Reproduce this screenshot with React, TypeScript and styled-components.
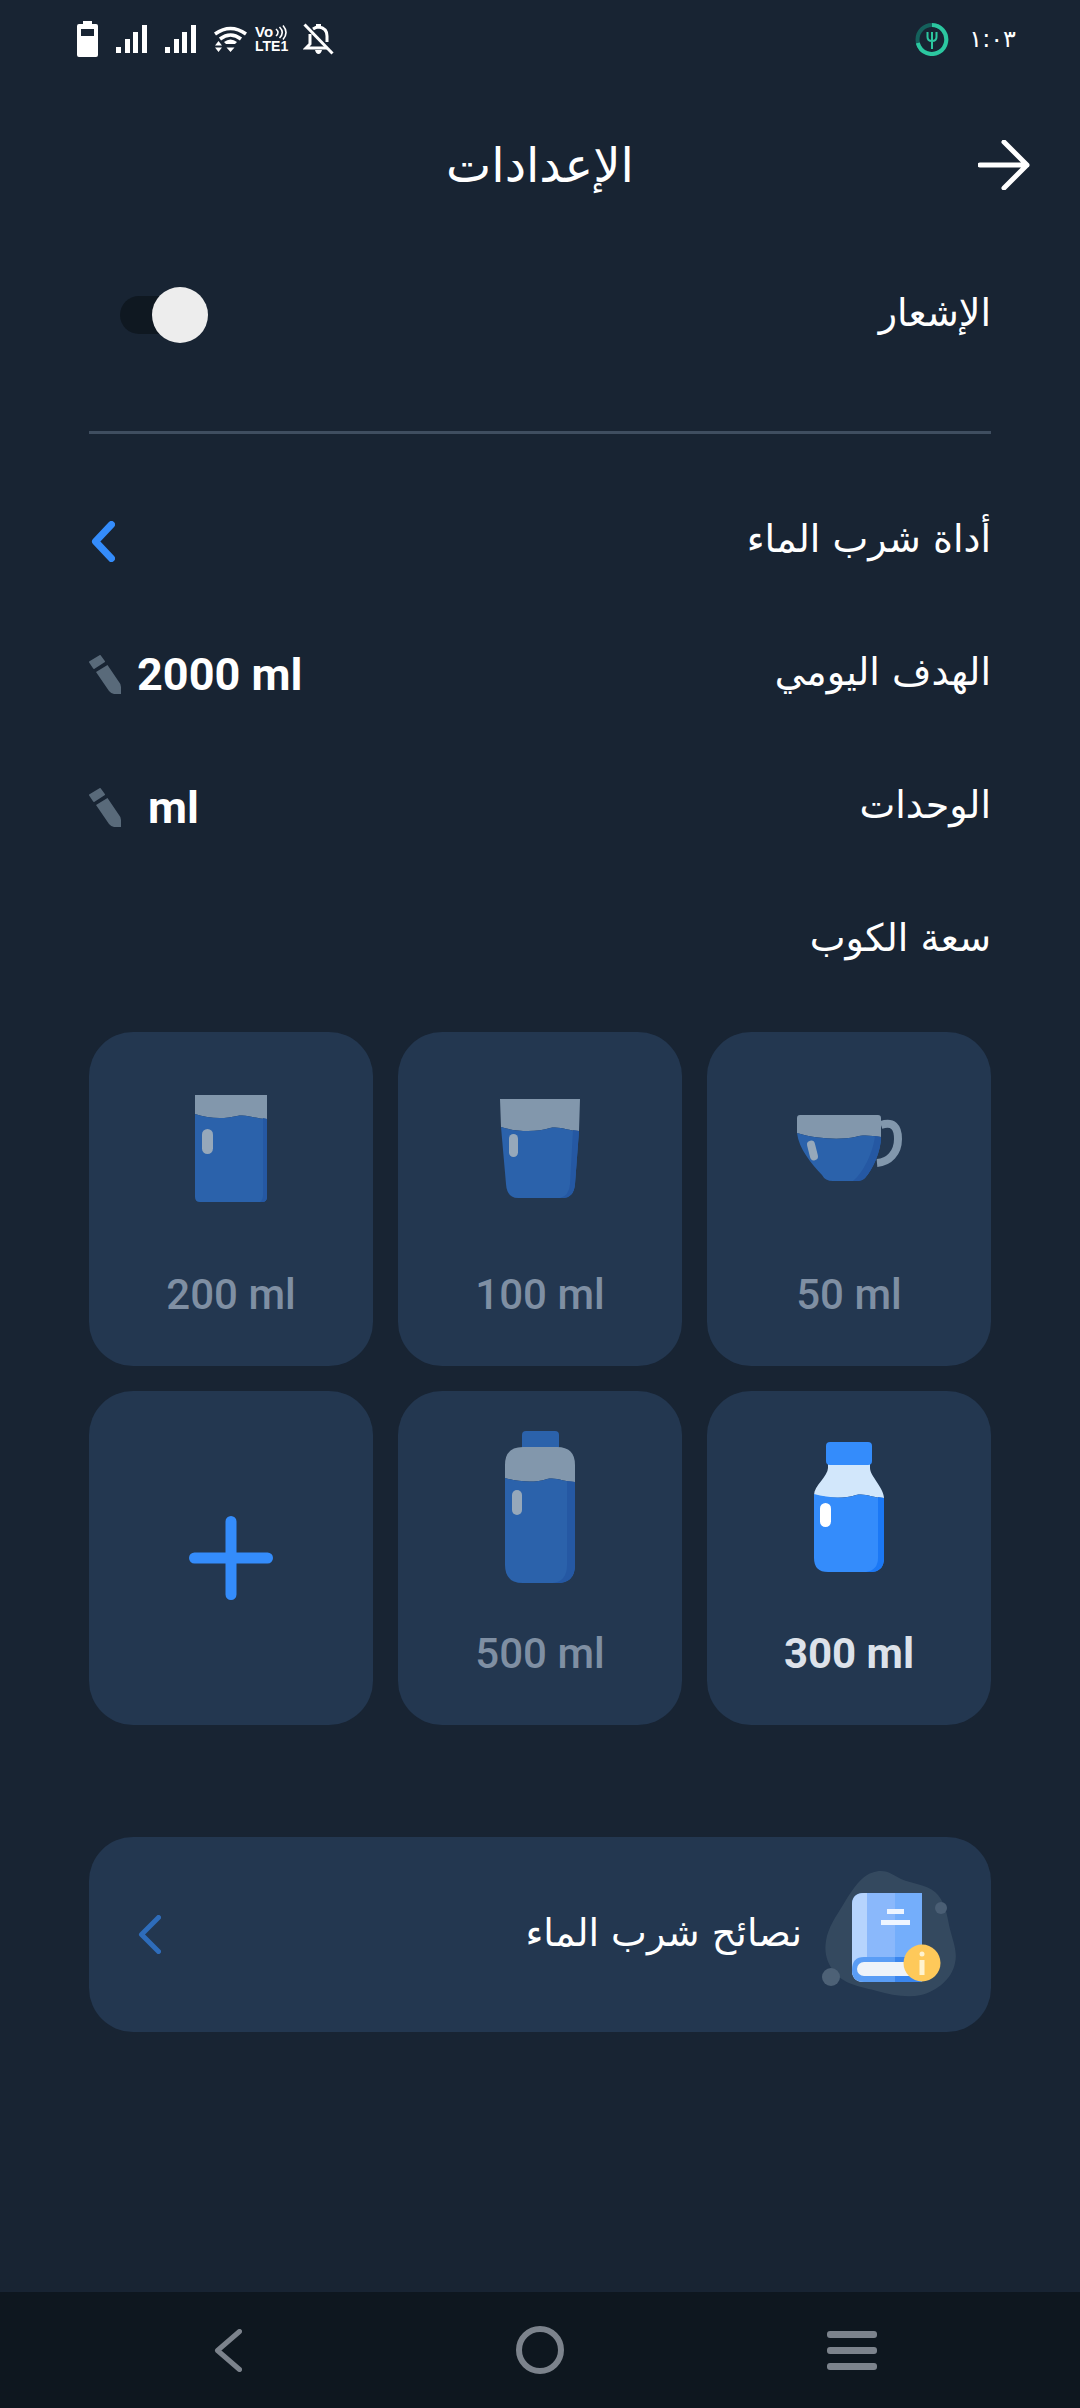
import React from "react";
import styled, { createGlobalStyle } from "styled-components";

const GlobalStyle = createGlobalStyle`
  html, body {
    margin: 0;
    padding: 0;
    background: #182433;
  }
  * {
    box-sizing: border-box;
  }
`;

const arabicFont = `"DejaVu Sans", sans-serif`;
const latinFont = `Roboto, "Liberation Sans", sans-serif`;

type DrinkKind = "tall" | "tumbler" | "cup" | "flask" | "bottle";

const dim = { top: "#8297ac", water: "#2b62ab", side: "#2558a3", cap: "#2b62ab", shine: "#96a8ba" };
const lit = { top: "#d2e7fb", water: "#348cfb", side: "#1b78f5", cap: "#348cfb", shine: "#ffffff" };

const DrinkIcon = ({ kind, selected }: { kind: DrinkKind; selected?: boolean }) => {
  const c = selected ? lit : dim;

  if (kind === "tall") {
    return (
      <svg width="72" height="107" viewBox="0 0 72 107">
        <path d="M0 0H72V24C60 24 52 19 42 21C30 24 14 24 0 19Z" fill={c.top} />
        <path d="M0 19C14 24 30 24 42 21C52 19 60 24 72 24V102Q72 107 67 107H5Q0 107 0 102Z" fill={c.water} />
        <path d="M68 23L72 24V102Q72 107 67 107H65Q68 105 68 100Z" fill={c.side} />
        <rect x="7" y="34" width="11" height="25" rx="5.5" fill={c.shine} />
      </svg>
    );
  }
  if (kind === "tumbler") {
    return (
      <svg width="80" height="99" viewBox="0 0 80 99">
        <path d="M0 0H80L79 32C68 32 60 27 50 29C38 33 16 33 1 28Z" fill={c.top} />
        <path d="M1 28C16 33 38 33 50 29C60 27 68 32 79 32L75 85Q74 99 62 99H18Q7 99 6 85Z" fill={c.water} />
        <path d="M73 31L79 32L75 85Q74 99 62 99H60Q69 97 70 85Z" fill={c.side} />
        <rect x="9" y="35" width="9" height="23" rx="4.5" fill={c.shine} />
      </svg>
    );
  }
  if (kind === "cup") {
    return (
      <svg width="105" height="66" viewBox="0 0 105 66">
        <path d="M84 10C96 6 101 12 101 24C101 38 92 47 80 48" fill="none" stroke={c.top} strokeWidth="8" />
        <path d="M0 3Q0 0 3 0H81Q84 0 84 3V22C74 21 68 19 58 22C44 25 18 24 0 18Z" fill={c.top} />
        <path d="M0 18C18 24 44 25 58 22C68 19 74 21 84 22C84 36 76 54 68 63Q65 66 60 66H36Q28 66 25 60C14 48 2 34 0 18Z" fill={c.water} />
        <path d="M78 21L84 22C84 36 76 54 68 63Q65 66 60 66H56C66 58 76 38 78 21Z" fill={c.side} />
        <rect x="11.5" y="25.5" width="8" height="20" rx="4" fill={c.shine} transform="rotate(-14 15.5 35.5)" />
      </svg>
    );
  }
  if (kind === "flask") {
    return (
      <svg width="70" height="152" viewBox="0 0 70 152">
        <path d="M17 4Q17 0 21 0H50Q54 0 54 4V18H17Z" fill={c.cap} />
        <path d="M0 34Q0 16 18 16H52Q70 16 70 34V51C58 51 52 46 42 48C30 52 14 51 0 47Z" fill={c.top} />
        <path d="M0 47C14 51 30 52 42 48C52 46 58 51 70 51V134Q70 152 52 152H18Q0 152 0 134Z" fill={c.water} />
        <path d="M62 50L70 51V134Q70 152 52 152H48Q62 150 62 134Z" fill={c.side} />
        <rect x="7" y="59" width="10" height="25" rx="5" fill={c.shine} />
      </svg>
    );
  }
  return (
    <svg width="70" height="130" viewBox="0 0 70 130">
      <path d="M14 20H56V26C56 34 70 46 70 56C58 56 52 51 42 53C30 57 14 56 0 53C0 44 14 34 14 26Z" fill={c.top} />
      <path d="M0 52C14 56 30 57 42 53C52 51 58 56 70 56V116Q70 130 56 130H14Q0 130 0 116Z" fill={c.water} />
      <path d="M64 55L70 56V116Q70 130 56 130H52Q64 128 64 116Z" fill={c.side} />
      <rect x="12" y="0" width="46" height="23" rx="4" fill={c.cap} />
      <rect x="6" y="61" width="11" height="24" rx="5.5" fill={c.shine} />
    </svg>
  );
};

const PlusIcon = () => (
  <svg width="84" height="84" viewBox="0 0 84 84">
    <path d="M5.5 42H78.5M42 5.5V78.5" stroke="#348cfb" strokeWidth="11" strokeLinecap="round" />
  </svg>
);

const Pencil = () => (
  <svg width="32" height="39" viewBox="0 0 32 39">
    <path d="M1 7L11 1L15 6.5L5 13Z" fill="#596a7a" stroke="#596a7a" strokeWidth="2" strokeLinejoin="round" />
    <path d="M7 17L18.5 10L30 27Q32 29 32 32V39H25Q22 38.5 20 36Z" fill="#596a7a" />
  </svg>
);

const Chevron = ({ w, h, color, sw }: { w: number; h: number; color: string; sw: number }) => (
  <svg width={w} height={h} viewBox={`0 0 ${w} ${h}`}>
    <path
      d={`M${w - sw / 2} ${sw / 2}L${sw / 2 + 1} ${h / 2}L${w - sw / 2} ${h - sw / 2}`}
      fill="none"
      stroke={color}
      strokeWidth={sw}
      strokeLinecap="round"
      strokeLinejoin="round"
    />
  </svg>
);

const BookArt = () => (
  <svg width="136" height="127" viewBox="-4 0 136 127">
    <path
      d="M56 0C64 0 70 5 76 8C88 13 100 13 110 21C120 30 122 44 124 54C127 68 133 80 130 92C127 108 112 120 96 124C82 127 66 124 52 120C38 116 20 114 10 102C2 92 -1 82 1 70C3 56 12 44 18 34C24 24 30 14 38 7C44 2 50 0 56 0Z"
      fill="#34495f"
    />
    <circle cx="116" cy="37" r="6" fill="#4a5e74" />
    <circle cx="6" cy="106" r="9" fill="#4d6176" />
    <path d="M39 22H97V111H39Q27 111 27 99V34Q27 22 39 22Z" fill="#8ab8fb" />
    <path d="M39 22H42V111H39Q27 111 27 99V34Q27 22 39 22Z" fill="#b6d4fd" />
    <rect x="70" y="22" width="27" height="89" fill="#74aefb" />
    <path d="M27 99Q27 86 39 86H70V111H39Q27 111 27 99Z" fill="#5a9df5" />
    <rect x="70" y="86" width="27" height="25" fill="#3a86ee" />
    <rect x="32" y="91" width="65" height="14" rx="7" fill="#eef3f9" />
    <rect x="62" y="38" width="17" height="5" fill="#eef5ff" />
    <rect x="56" y="49" width="29" height="5" fill="#eef5ff" />
    <circle cx="97" cy="92" r="18.5" fill="#fec95a" />
    <circle cx="97" cy="83" r="2.5" fill="#fff3cf" />
    <rect x="94.5" y="89" width="5" height="15" fill="#fff3cf" />
  </svg>
);

const BatteryIcon = () => (
  <svg width="21" height="36" viewBox="0 0 21 36">
    <path fillRule="evenodd" fill="#fff" d="M6 0H15V3H19Q21 3 21 5V34Q21 36 19 36H2Q0 36 0 34V5Q0 3 2 3H6ZM4 8V15H17V8Z" />
  </svg>
);

const SignalIcon = () => (
  <svg width="31" height="28" viewBox="0 0 31 28">
    <path fill="#fff" d="M0 22H5V28H0ZM9 14H14V28H9ZM17 7H22V28H17ZM26 0H31V28H26Z" />
  </svg>
);

const WifiIcon = () => (
  <svg width="33" height="27" viewBox="0 0 33 27">
    <path d="M1 8Q16.5 -3 32 8M6 13Q16.5 5 27 13" fill="none" stroke="#fff" strokeWidth="3.5" />
    <path fill="#fff" d="M10 16Q16.5 11 23 16L21 18H12ZM1 19.5H8L4.5 15ZM1 21.5H8L4.5 26ZM12.5 21.5H20.5L16.5 26Z" />
  </svg>
);

const VolteWaves = () => (
  <svg width="12" height="15" viewBox="0 0 12 15">
    <path d="M1 4Q5 7.5 1 11M4.5 2Q10 7.5 4.5 13M8 0.5Q14 7.5 8 14.5" fill="none" stroke="#fff" strokeWidth="1.6" />
  </svg>
);

const BellOffIcon = () => (
  <svg width="31" height="32" viewBox="0 0 31 32">
    <path d="M7 11V21L3 25H24M10 6Q13 4 15.5 4Q24 5 24 13V19" fill="none" stroke="#fff" strokeWidth="3" />
    <path d="M13 1H18V4H13ZM12 27H19Q18 31 15.5 31Q13 31 12 27Z" fill="#fff" />
    <path d="M1.5 1.5L29.5 30.5" stroke="#fff" strokeWidth="3" />
  </svg>
);

const MealRing = () => (
  <svg width="34" height="33" viewBox="0 0 34 33">
    <circle cx="17" cy="16.5" r="14.5" fill="none" stroke="#14615c" strokeWidth="4" />
    <path d="M17 2A14.5 14.5 0 1 1 12 30.2A14.5 14.5 0 0 1 2.8 20" fill="none" stroke="#2cc7a0" strokeWidth="4" />
    <path d="M12.5 9V14Q12.5 18 17 18Q21.5 18 21.5 14V9M17 9V26" fill="none" stroke="#2cc7a0" strokeWidth="2" />
  </svg>
);

const BackArrow = () => (
  <svg width="52" height="50" viewBox="0 0 52 50">
    <path d="M2 25H49M26 2L49 25L26 48" fill="none" stroke="#fff" strokeWidth="5" strokeLinecap="round" strokeLinejoin="round" />
  </svg>
);

const Settings = () => {
  const drinks: { label: string; kind: DrinkKind }[] = [
    { label: "50 ml", kind: "cup" },
    { label: "100 ml", kind: "tumbler" },
    { label: "200 ml", kind: "tall" },
    { label: "300 ml", kind: "bottle" },
    { label: "500 ml", kind: "flask" },
  ];

  return (
    <Screen dir="rtl">
      <GlobalStyle />
      <StatusBar>
        <StatusTime>
          <TimeText>١:٠٣</TimeText>
          <MealRing />
        </StatusTime>
        <StatusIcons dir="ltr">
          <BatteryIcon />
          <SignalIcon />
          <SignalIcon />
          <WifiIcon />
          <Volte>
            <VolteTop>
              <VoText>Vo</VoText>
              <VolteWaves />
            </VolteTop>
            <LteText>LTE1</LteText>
          </Volte>
          <BellSlot>
            <BellOffIcon />
          </BellSlot>
        </StatusIcons>
      </StatusBar>

      <Header>
        <HeaderBack><BackArrow /></HeaderBack>
        <Title>الإعدادات</Title>
      </Header>

      <Body>
        <NotifyRow>
          <NotifyLabel>الإشعار</NotifyLabel>
          <Toggle>
            <ToggleKnob />
          </Toggle>
        </NotifyRow>
        <Divider />

        <Row>
          <RowLabel>أداة شرب الماء</RowLabel>
          <ChevronSlot>
            <Chevron w={24} h={41} color="#348cfb" sw={7} />
          </ChevronSlot>
        </Row>
        <Row>
          <RowLabel>الهدف اليومي</RowLabel>
          <EditValue dir="ltr" $gap={16}>
            <Pencil />
            <ValueText>2000 ml</ValueText>
          </EditValue>
        </Row>
        <Row>
          <RowLabel>الوحدات</RowLabel>
          <EditValue dir="ltr" $gap={27}>
            <Pencil />
            <ValueText>ml</ValueText>
          </EditValue>
        </Row>
        <Row>
          <RowLabel>سعة الكوب</RowLabel>
        </Row>

        <DrinkGrid>
          {drinks.map((drink) => (
            <DrinkCard key={drink.label}>
              <IconSlot>
                <DrinkIcon kind={drink.kind} selected={drink.label === "300 ml"} />
              </IconSlot>
              <DrinkLabel dir="ltr" $selected={drink.label === "300 ml"}>
                {drink.label}
              </DrinkLabel>
            </DrinkCard>
          ))}
          <AddCard>
            <PlusIcon />
          </AddCard>
        </DrinkGrid>

        <TipCard>
          <TipLead>
            <BookArt />
            <TipText>نصائح شرب الماء</TipText>
          </TipLead>
          <Chevron w={23} h={39} color="#2e6cba" sw={5} />
        </TipCard>
      </Body>

      <NavBar dir="ltr">
        <NavItem>
          <Chevron w={28} h={43} color="#7c838c" sw={5} />
        </NavItem>
        <NavItem>
          <NavCircle />
        </NavItem>
        <NavItem>
          <NavLines>
            <NavLine />
            <NavLine />
            <NavLine />
          </NavLines>
        </NavItem>
      </NavBar>
    </Screen>
  );
};

export default Settings;

const Screen = styled.div`
  width: 1080px;
  height: 2408px;
  background: #182433;
  color: #fff;
  font-family: ${arabicFont};
  display: flex;
  flex-direction: column;
  overflow: hidden;
`;

const StatusBar = styled.div`
  height: 78px;
  padding: 0 64px 0 77px;
  display: flex;
  align-items: center;
  justify-content: space-between;
`;

const StatusTime = styled.div`
  display: flex;
  align-items: center;
  gap: 20px;
`;

const TimeText = styled.span`
  font-size: 24px;
  line-height: 1;
`;

const StatusIcons = styled.div`
  display: flex;
  align-items: center;
  gap: 18px;
`;

const Volte = styled.div`
  margin-left: -10px;
  width: 35px;
  font-family: "Liberation Sans", sans-serif;
  font-weight: 700;
  display: flex;
  flex-direction: column;
`;

const VolteTop = styled.div`
  height: 14px;
  display: flex;
  align-items: center;
  justify-content: space-between;
  padding-right: 3px;
`;

const VoText = styled.span`
  font-size: 15px;
  line-height: 14px;
`;

const LteText = styled.span`
  font-size: 14px;
  line-height: 14px;
`;

const BellSlot = styled.div`
  display: flex;
  margin-left: -5px;
`;

const Header = styled.div`
  height: 174px;
  padding: 0 50px;
  display: grid;
  grid-template-columns: 1fr auto 1fr;
  align-items: center;
`;

const HeaderBack = styled.div`
  display: flex;
  justify-content: flex-start;
`;

const Title = styled.div`
  font-size: 48px;
  line-height: 1;
`;

const Body = styled.div`
  padding: 0 89px;
  display: flex;
  flex-direction: column;
`;

const Row = styled.div`
  height: 133px;
  display: flex;
  align-items: center;
  justify-content: space-between;
`;

const NotifyRow = styled(Row)`
  height: 122px;
  padding-left: 31px;
`;

const RowLabel = styled.div`
  font-size: 38px;
  line-height: 1;
  padding-bottom: 5px;
`;

const NotifyLabel = styled(RowLabel)`
  padding-bottom: 0;
`;

const ChevronSlot = styled.div`
  display: flex;
  padding-left: 2px;
`;

const Toggle = styled.div`
  position: relative;
  width: 80px;
  height: 38px;
  margin-top: 4px;
  border-radius: 19px;
  background: #0f1821;
`;

const ToggleKnob = styled.div`
  position: absolute;
  left: 32px;
  top: -9px;
  width: 56px;
  height: 56px;
  border-radius: 50%;
  background: #ededed;
`;

const Divider = styled.div`
  height: 3px;
  margin: 57px 0 41px;
  background: #3f4e60;
`;

const EditValue = styled.div<{ $gap: number }>`
  display: flex;
  align-items: center;
  gap: ${({ $gap }) => $gap}px;
`;

const ValueText = styled.div`
  font-family: ${latinFont};
  font-weight: 700;
  font-size: 45px;
  line-height: 1;
`;

const DrinkGrid = styled.div`
  margin-top: 25px;
  display: grid;
  grid-template-columns: repeat(3, 284px);
  grid-auto-rows: 334px;
  gap: 25px;
`;

const DrinkCard = styled.div`
  background: #233750;
  border-radius: 44px;
  display: flex;
  flex-direction: column;
`;

const AddCard = styled(DrinkCard)`
  align-items: center;
  justify-content: center;
`;

const IconSlot = styled.div`
  height: 232px;
  flex: none;
  display: flex;
  align-items: center;
  justify-content: center;
`;

const DrinkLabel = styled.div<{ $selected?: boolean }>`
  height: 62px;
  font-family: ${latinFont};
  font-size: 42px;
  line-height: 62px;
  text-align: center;
  font-weight: ${({ $selected }) => ($selected ? 700 : 500)};
  color: ${({ $selected }) => ($selected ? "#dde2ea" : "#7f8fa3")};
`;

const TipCard = styled.div`
  margin-top: 112px;
  height: 195px;
  padding: 0 34px 0 49px;
  background: #233750;
  border-radius: 44px;
  display: flex;
  align-items: center;
  justify-content: space-between;
`;

const TipLead = styled.div`
  display: flex;
  align-items: center;
  gap: 19px;
`;

const TipText = styled.div`
  font-size: 38px;
  line-height: 1;
  padding-bottom: 3px;
`;

const NavBar = styled.div`
  margin-top: auto;
  height: 116px;
  background: #0e171f;
  display: grid;
  grid-template-columns: repeat(3, 312px);
  justify-content: center;
  align-items: center;
`;

const NavItem = styled.div`
  display: flex;
  justify-content: center;
`;

const NavCircle = styled.div`
  width: 48px;
  height: 48px;
  border-radius: 50%;
  border: 6px solid #7c838c;
`;

const NavLines = styled.div`
  width: 50px;
  display: flex;
  flex-direction: column;
  gap: 9px;
`;

const NavLine = styled.div`
  height: 7px;
  border-radius: 3px;
  background: #7c838c;
`;
